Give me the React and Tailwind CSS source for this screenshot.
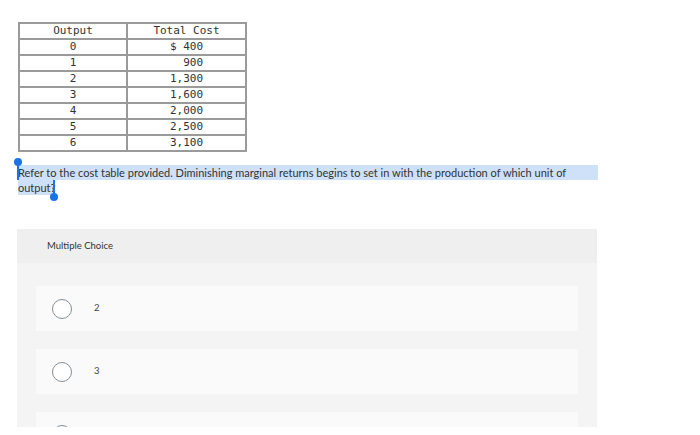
import React from 'react';

const rows = [
  ['0', '$ 400'],
  ['1', '  900'],
  ['2', '1,300'],
  ['3', '1,600'],
  ['4', '2,000'],
  ['5', '2,500'],
  ['6', '3,100'],
];

const options = ['2', '3', ''];

const CostTable = () => (
  <div className="ml-[18px] w-[229px] border-2 border-b-0 border-[#9a9a9a] font-['DejaVu_Sans_Mono',monospace] text-[11px] text-[#333]">
    {[['Output', 'Total Cost'], ...rows].map(([out, cost], i) => (
      <div key={i} className="flex h-[16px] border-b-2 border-[#9a9a9a] leading-[14px]">
        <div className="w-[108px] border-r-2 border-[#9a9a9a] text-center">{out}</div>
        <div className="flex-1 text-center whitespace-pre">{cost}</div>
      </div>
    ))}
  </div>
);

const Radio = () => (
  <span className="block h-[20px] w-[20px] rounded-full border-[1.5px] border-[#858d96] bg-white"></span>
);

export default function App() {
  return (
    <div className="h-[435px] overflow-hidden bg-white pt-[22px] font-['Lato',sans-serif] text-[#333]">
      <CostTable />

      {/* selected question text */}
      <div className="relative mt-[13px] ml-[18px] text-[11px] leading-[15px]">
        <div className="w-[580px] bg-[#cfe1f8]">
          Refer to the cost table provided. Diminishing marginal returns begins to set in with the production of which unit of
        </div>
        <span className="inline-block bg-[#cfe1f8]">output?</span>
        <span className="absolute left-[-4px] top-[-7px] h-[8px] w-[8px] rounded-full bg-[#1a73e8]"></span>
        <span className="absolute left-[-1px] top-0 h-[15px] w-[2px] bg-[#1a73e8]"></span>
        <span className="absolute left-[35px] top-[15px] h-[15px] w-[2px] bg-[#1a73e8]"></span>
        <span className="absolute left-[32px] top-[28px] h-[8px] w-[8px] rounded-full bg-[#1a73e8]"></span>
      </div>

      <div className="mt-[34px] ml-[17px] w-[580px] h-[198px] overflow-hidden bg-[#f4f4f4]">
        <div className="flex h-[34px] items-center bg-[#efefef] pl-[30px] text-[9.5px] text-[#333]">
          Multiple Choice
        </div>
        <div className="flex flex-col gap-[18px] px-[19px] pt-[23px]">
          {options.map((o, i) => (
            <div key={i} className="flex h-[45px] items-center bg-[#fafafa] pl-[16px]">
              <Radio />
              {o && <span className="ml-[22px] text-[9.5px] text-[#444]">{o}</span>}
            </div>
          ))}
        </div>
      </div>
    </div>
  );
}
